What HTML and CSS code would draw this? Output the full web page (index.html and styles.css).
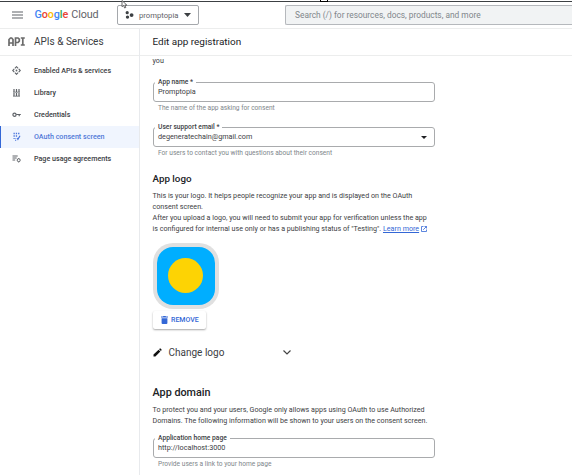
FILE: index.html
```html
<!DOCTYPE html>
<html lang="en">
<head>
<meta charset="utf-8">
<title>Edit app registration</title>
<link rel="stylesheet" href="styles.css">
</head>
<body>
<header class="topbar">
  <svg class="menu" width="11" height="8" viewBox="0 0 11 8"><path d="M0 1h11M0 4h11M0 7h11" stroke="#5f6368" stroke-width="1.1"/></svg>
  <div class="brand"><b class="blue">G</b><b class="red">o</b><b class="yellow">o</b><b class="blue">g</b><b class="green">l</b><b class="red">e</b><span class="cloud">Cloud</span></div>
  <button class="project">
    <svg width="9" height="8" viewBox="0 0 9 8" fill="#3c4043"><circle cx="2.2" cy="1.7" r="1.6"/><circle cx="2.5" cy="6.1" r="1.7"/><circle cx="6.6" cy="4.1" r="1.9"/></svg>
    <span class="project-name">promptopia</span>
    <svg width="7" height="4" viewBox="0 0 7 4"><path d="M0 0h7L3.5 4z" fill="#3c4043"/></svg>
  </button>
  <div class="search"><span>Search (/) for resources, docs, products, and more</span></div>
  <svg class="cursor" width="8" height="9" viewBox="0 0 8 9"><path d="M1 .5v6.2l1.600-1.300 1 2.600 1.200-.5-1-2.400h2z" fill="#fff" stroke="#444" stroke-width=".8"/></svg>
  <i class="caret"></i>
</header>
<div class="shell">
  <aside class="sidebar">
    <div class="side-head">
      <svg width="17" height="9" viewBox="0 0 17 9" fill="none" stroke="#6b6b6b" stroke-width="1.700"><path d="M1 9V2.500L2.500 1h1.200L5 2.500V9M1 6h4M7.500 9V1h2.500l1.300 1.200v2L10 5.500H7.500M12.800 1h4M14.800 1v7M12.800 8h4"/></svg>
      <span>APIs &amp; Services</span>
    </div>
    <nav>
      <a class="item"><svg width="9" height="9" viewBox="0 0 9 9" fill="none" stroke="#5f6368" stroke-width="1.100"><path d="M2.900 2.300 4.500.7l1.600 1.600M2.900 6.700l1.600 1.600 1.600-1.600M2.300 2.900.7 4.500l1.600 1.600M6.700 2.900l1.600 1.600-1.600 1.600"/><circle cx="4.500" cy="4.500" r=".9" fill="#5f6368" stroke="none"/></svg><span>Enabled APIs &amp; services</span></a>
      <a class="item"><svg width="9" height="9" viewBox="0 0 9 9" fill="none" stroke="#5f6368"><path d="M2 1v3M4.500 1v3M7 1v3M2 5v3M4.500 5v3M7 5v3" stroke-width="1.200"/><path d="M1 4.200h7M1 8.200h7" stroke-width=".8"/></svg><span>Library</span></a>
      <a class="item"><svg width="9" height="9" viewBox="0 0 9 9" fill="none" stroke="#5f6368" stroke-width="1.200"><circle cx="2.500" cy="4.700" r="1.600"/><path d="M4.200 4.500h4.600M7.200 4.500v1.800"/></svg><span>Credentials</span></a>
      <a class="item active"><svg width="9" height="9" viewBox="0 0 9 9" fill="none" stroke="#4a76dc"><path d="M1.500 1.500h6.500M1.500 4h4" stroke-width="1.300" stroke-dasharray="1.300 1"/><path d="M1.500 6.500h2.500M3 8.300h1.500" stroke-width="1.100" stroke-dasharray="1.200 .8"/><path d="m5 6 .9 1.400L8 3.700" stroke-width="1.200"/></svg><span>OAuth consent screen</span></a>
      <a class="item"><svg width="9" height="9" viewBox="0 0 9 9" fill="none" stroke="#5f6368"><path d="M.5 2h5.200M.5 4h4.200M.5 6h2.700"/><circle cx="6.700" cy="6.200" r="1.500"/><path d="M6.700 4v.7M6.700 7.700v.7"/></svg><span>Page usage agreements</span></a>
    </nav>
  </aside>
  <main>
    <h1><span>Edit app registration</span></h1>
    <div class="content">
      <p class="text you">you</p>
      <div class="field">
        <label>App name *</label>
        <div class="value">Promptopia</div>
      </div>
      <p class="hint">The name of the app asking for consent</p>
      <div class="field second">
        <label>User support email *</label>
        <div class="value">degeneratechain@gmail.com</div>
        <svg class="arrow" width="6" height="3" viewBox="0 0 6 3"><path d="M0 0h6L3 3z" fill="#202124"/></svg>
      </div>
      <p class="hint">For users to contact you with questions about their consent</p>
      <h2 class="logo-title">App logo</h2>
      <p class="text logo-text">This is your logo. It helps people recognize your app and is displayed on the OAuth<br>consent screen.<br>After you upload a logo, you will need to submit your app for verification unless the app<br>is configured for internal use only or has a publishing status of "Testing". <a class="learn">Learn more</a> <svg width="6" height="6" viewBox="0 0 6 6" fill="none" stroke="#3367d6" stroke-width=".8"><path d="M2.500.5h-2v5h5v-2M3.500.5h2v2M5.500.5 2.200 3.800"/></svg></p>
      <div class="logo"><div class="tile"><div class="disc"></div></div></div>
      <button class="remove"><svg width="7" height="8" viewBox="0 0 7 8" fill="#3367d6"><path d="M0 .6h2L2.400 0h2.200L5 .6h2v1H0zM.6 2.200h5.800V7q0 1-1 1H1.600q-1 0-1-1z"/></svg><span>REMOVE</span></button>
      <div class="change">
        <svg width="9" height="9" viewBox="0 0 9 9" fill="#111"><path d="M.5 8.500V6.600L5.600 1.700 7.400 3.500 2.400 8.500zM6.100 1.200 6.800.6q.4-.3.800 0l.9.9q.3.400 0 .8l-.6.700z"/></svg>
        <span>Change logo</span>
        <svg width="8" height="5" viewBox="0 0 8 5" fill="none" stroke="#444" stroke-width="1.200"><path d="m.5.500 3.500 3.500L7.500.5"/></svg>
      </div>
      <h2 class="domain-title">App domain</h2>
      <p class="text domain-text">To protect you and your users, Google only allows apps using OAuth to use Authorized<br>Domains. The following information will be shown to your users on the consent screen.</p>
      <div class="field third">
        <label>Application home page</label>
        <div class="value">http://localhost:3000</div>
      </div>
      <p class="hint">Provide users a link to your home page</p>
    </div>
  </main>
</div>
</body>
</html>
```
FILE: styles.css
```css
* { box-sizing: border-box; }
body { margin: 0; width: 572px; height: 475px; overflow: hidden; background: #fff; font-family: Roboto, "Liberation Sans", sans-serif; color: #3c4043; }
p, h1, h2 { margin: 0; }
svg { flex: none; display: block; }
button { font-family: inherit; padding: 0; }
.topbar { position: relative; height: 29px; display: flex; align-items: center; padding-top: 2px; border-bottom: 1px solid #eceded; }
.topbar::before { content: ""; position: absolute; left: 0; right: 0; top: 1px; height: 1px; background: #3c4043; }
.menu { margin-left: 12px; }
.brand { display: flex; margin-left: 11.5px; width: 82.5px; font-size: 10.8px; line-height: 14px; color: #5f6368; letter-spacing: -.1px; }
.brand b { font-weight: 500; }
.brand .cloud { margin-left: 3px; }
.blue { color: #4285f4; }
.red { color: #ea4335; }
.yellow { color: #fbbc04; }
.green { color: #34a853; }
.project { width: 82px; height: 20px; display: flex; align-items: center; padding-left: 7px; background: #fff; border: 1px solid #a5a8ac; border-radius: 2px; color: #5f6368; font-size: 7.7px; }
.project-name { width: 41px; margin: 0 4px 0 5px; text-align: left; }
.search { margin-left: 86px; flex: 1; height: 20px; background: #f1f3f4; border: 1px solid #b5b8bc; border-right: 0; border-radius: 2px 0 0 2px; font-size: 8.35px; line-height: 18px; padding-left: 9px; color: #80868b; white-space: nowrap; }
.cursor { position: absolute; left: 121px; top: 0; }
.caret { position: absolute; left: 320px; top: -2px; width: 8px; height: 4px; border: 1px solid #000; background: #fff; }
.shell { display: flex; height: 446px; }
.sidebar { width: 140px; border-right: 1px solid #e8eaed; }
.side-head, h1 { height: 27px; display: flex; align-items: center; padding-bottom: 1px; border-bottom: 1px solid #eceded; font-size: 10px; font-weight: 400; color: #3c4043; white-space: nowrap; }
.side-head { padding-left: 8px; gap: 9px; }
nav { padding-top: 4px; }
.item { height: 22px; display: flex; align-items: center; gap: 13px; padding: 0 0 1px 12px; font-size: 7.15px; font-weight: 500; color: #3c4043; white-space: nowrap; }
.active { background: #f0f5fe; color: #5079d8; box-shadow: inset 1px 0 #3367d6; }
main { flex: 1; }
h1 { padding-left: 12.5px; font-size: 9.95px; color: #202124; }
.content { padding-left: 12.5px; width: 295px; }
.text { font-size: 7.15px; line-height: 11px; white-space: nowrap; color: #3c4043; }
.you { height: 26px; line-height: 9px; }
.field { position: relative; width: 282px; height: 20px; border: 1px solid #a9abad; border-radius: 3px; padding-left: 4.5px; }
.field label { position: absolute; left: 1.5px; top: -5px; padding: 0 3px; background: #fff; font-size: 6.7px; line-height: 8px; font-weight: 500; white-space: nowrap; }
.value { font-size: 7.25px; line-height: 18px; }
.arrow { position: absolute; right: 7px; top: 8px; }
.hint { height: 11px; padding: 1px 0 0 5.5px; font-size: 6.62px; line-height: 10px; color: #80868b; white-space: nowrap; }
.second { margin-top: 14px; }
h2 { font-size: 9.8px; font-weight: 500; line-height: 14px; color: #202124; }
.logo-title { margin-top: 14px; }
.logo-text { margin-top: 4px; }
.learn { color: #3367d6; text-decoration: underline; }
.logo-text svg { display: inline-block; vertical-align: -1px; }
.logo { width: 66px; height: 66px; margin-top: 8.5px; padding: 4px; background: #e0e0e0; border-radius: 20px; }
.tile { height: 58px; display: grid; place-items: center; background: #00aeff; border-radius: 16px; }
.disc { width: 35px; height: 35px; border-radius: 50%; background: #fdd304; }
.remove { width: 53.5px; height: 18px; margin-top: 2px; display: flex; align-items: center; gap: 3.5px; padding-left: 8px; border: 0; border-radius: 2px; background: #fff; box-shadow: 0 1px 2px rgba(0,0,0,.35); color: #3367d6; font-size: 7px; font-weight: 500; }
.change { display: flex; align-items: center; height: 16px; margin-top: 15.5px; font-size: 10px; }
.change span { width: 114px; margin-left: 7px; }
.domain-title { margin-top: 26px; font-size: 10.8px; }
.domain-text { margin-top: 4px; }
.third { margin-top: 12px; }
```
